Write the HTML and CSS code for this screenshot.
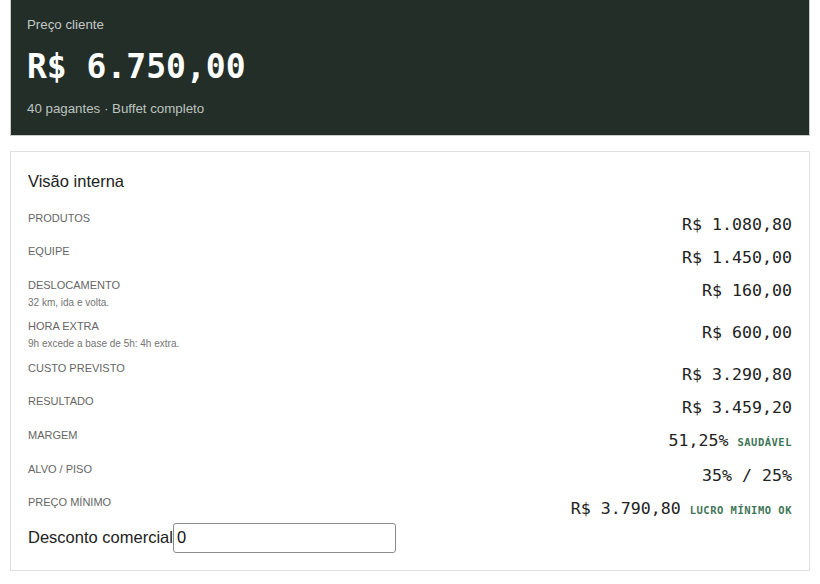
FILE: index.html
```html
<!DOCTYPE html>
<html lang="pt-BR">
<head>
<meta charset="utf-8">
<title>Preço cliente</title>
<link rel="stylesheet" href="styles.css">
</head>
<body>
<section class="hero">
  <div class="hero-label">Preço cliente</div>
  <div class="hero-price">R$ 6.750,00</div>
  <div class="hero-sub">40 pagantes · Buffet completo</div>
</section>

<section class="card">
  <h2 class="card-title">Visão interna</h2>
  <div class="row">
    <div class="lbl"><div class="name">Produtos</div></div>
    <div class="val">R$ 1.080,80</div>
  </div>
  <div class="row">
    <div class="lbl"><div class="name">Equipe</div></div>
    <div class="val">R$ 1.450,00</div>
  </div>
  <div class="row">
    <div class="lbl"><div class="name">Deslocamento</div><div class="note">32 km, ida e volta.</div></div>
    <div class="val">R$ 160,00</div>
  </div>
  <div class="row">
    <div class="lbl"><div class="name">Hora extra</div><div class="note">9h excede a base de 5h: 4h extra.</div></div>
    <div class="val">R$ 600,00</div>
  </div>
  <div class="row">
    <div class="lbl"><div class="name">Custo previsto</div></div>
    <div class="val">R$ 3.290,80</div>
  </div>
  <div class="row">
    <div class="lbl"><div class="name">Resultado</div></div>
    <div class="val">R$ 3.459,20</div>
  </div>
  <div class="row">
    <div class="lbl"><div class="name">Margem</div></div>
    <div class="val">51,25%<span class="badge">Saudável</span></div>
  </div>
  <div class="row">
    <div class="lbl"><div class="name">Alvo / Piso</div></div>
    <div class="val">35% / 25%</div>
  </div>
  <div class="row">
    <div class="lbl"><div class="name">Preço mínimo</div></div>
    <div class="val">R$ 3.790,80<span class="badge">Lucro mínimo OK</span></div>
  </div>
  <label class="discount">Desconto comercial<input class="discount-input" type="text" value="0"></label>
</section>
</body>
</html>
```

FILE: styles.css
```css
html, body {
  margin: 0;
  padding: 0;
  background: #ffffff;
}
body {
  padding: 0 10px;
  font-family: "Liberation Sans", Arial, sans-serif;
  color: #222;
}
.hero {
  background: #242e29;
  border: 1px solid #c9cecb;
  border-top: none;
  padding: 16px 16px 18px;
  display: flex;
  flex-direction: column;
  height: 136px;
  box-sizing: border-box;
}
.hero-label {
  font-size: 13.3px;
  line-height: 17px;
  color: #c3c9c5;
}
.hero-price {
  margin-top: 14px;
  font-family: "DejaVu Sans Mono", monospace;
  font-weight: bold;
  font-size: 33px;
  line-height: 40px;
  color: #ffffff;
}
.hero-sub {
  margin-top: 13px;
  font-size: 13.3px;
  line-height: 17px;
  color: #bcc3bf;
}
.card {
  margin-top: 15px;
  border: 1px solid #dde1df;
  padding: 18px 17px 17px;
  background: #fff;
}
.card-title {
  margin: 0 0 12px;
  font-size: 16.5px;
  line-height: 22px;
  font-weight: normal;
  color: #222;
}
.row {
  display: flex;
  justify-content: space-between;
  align-items: flex-start;
  padding: 6px 0 1.8px;
}
.lbl .name {
  font-size: 11px;
  line-height: 17px;
  text-transform: uppercase;
  color: #666;
}
.lbl .note {
  font-size: 10px;
  line-height: 17px;
  color: #747474;
}
.val {
  margin-top: 3.5px;
  font-family: "DejaVu Sans Mono", monospace;
  font-size: 16.6px;
  line-height: 22px;
  color: #222;
  white-space: nowrap;
}
.badge {
  margin-left: 9px;
  font-size: 10.5px;
  font-weight: bold;
  letter-spacing: 0.5px;
  text-transform: uppercase;
  color: #3f7658;
}
.discount {
  display: flex;
  align-items: center;
  margin-top: 0;
  font-size: 16.5px;
  color: #222;
}
.discount-input {
  width: 223px;
  height: 30px;
  box-sizing: border-box;
  margin: 0;
  padding: 0 3px;
  border: 1px solid #8b8b8b;
  border-radius: 3px;
  font-family: "Liberation Sans", Arial, sans-serif;
  font-size: 16.5px;
  color: #111;
  background: #fff;
}
```
